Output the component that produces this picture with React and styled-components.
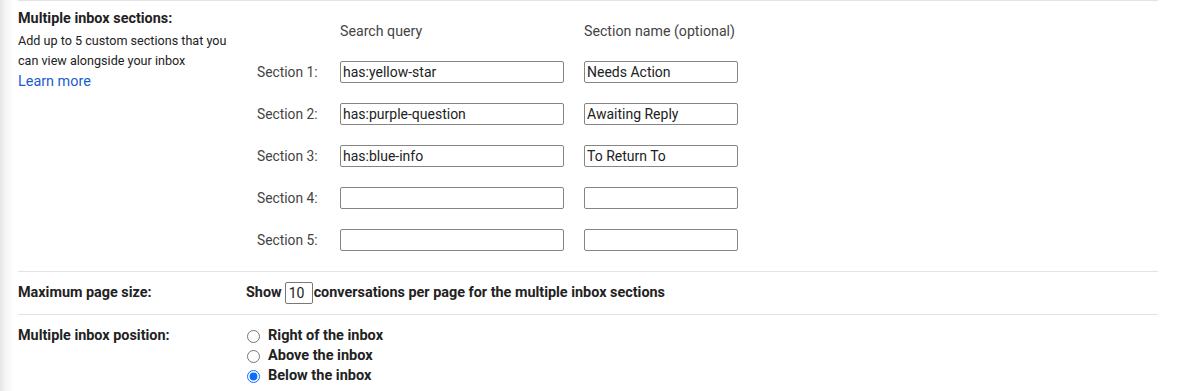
import React from "react";
import styled, { createGlobalStyle } from "styled-components";

const Global = createGlobalStyle`
  html, body { margin: 0; padding: 0; background: #fff; }
  body {
    font-family: Roboto, "Liberation Sans", Arial, sans-serif;
    color: #222;
    background: linear-gradient(to right, #e6e6e6 0px, #f6f6f6 6px, #ffffff 14px) no-repeat;
    min-height: 391px;
  }
`;

const Page = styled.div`
  padding-left: 18px;
  width: 1140px;
`;

const Row = styled.div`
  display: grid;
  grid-template-columns: 228px 1fr;
  border-top: 1px solid #e3e3e3;
  padding: ${(p) => p.$pad || "0"};
`;

const Label = styled.div`
  font-size: 14.4px;
  line-height: 20px;
  font-weight: 700;
  color: #222;
  align-self: ${(p) => (p.$center ? "center" : "start")};
`;

const SideBlock = styled.div`
  padding-top: 10px;
  display: flex;
  flex-direction: column;
`;

const SideTitle = styled.div`
  font-size: 14.4px;
  font-weight: 700;
  line-height: 16px;
  color: #222;
`;

const SideDesc = styled.div`
  margin-top: 4px;
  font-size: 12.6px;
  line-height: 20px;
  color: #222;
  width: 220px;
`;

const LearnMore = styled.a`
  font-size: 14.4px;
  line-height: 20px;
  color: #1a5ccf;
  text-decoration: none;
  margin-top: 1px;
`;

const SectionGrid = styled.div`
  padding: 20px 0 10px;
  display: grid;
  grid-template-columns: 94px 244px 154px;
  grid-template-rows: 30px repeat(5, 42px);
  align-items: center;
`;

const HeadCell = styled.div`
  font-size: 14.2px;
  line-height: 20px;
  color: #444;
  align-self: start;
`;

const SectionLabel = styled.div`
  font-size: 13.8px;
  color: #444;
  padding-left: 11px;
`;

const TextBox = styled.input`
  box-sizing: border-box;
  width: ${(p) => p.$w}px;
  height: 22px;
  margin: 0;
  border: 1px solid #858585;
  border-radius: 2px;
  padding: 0 2px;
  font-family: Roboto, "Liberation Sans", Arial, sans-serif;
  font-size: 14px;
  color: #222;
  background: #fff;
  outline: none;
`;

const InlineLine = styled.div`
  display: flex;
  align-items: center;
  font-size: 14.4px;
  line-height: 20px;
  font-weight: 700;
  color: #222;
`;

const SmallBox = styled.input`
  box-sizing: border-box;
  width: 28px;
  height: 22px;
  margin: 0 1px 0 3px;
  border: 1px solid #777;
  border-radius: 2px;
  padding: 0 3px;
  font-family: Roboto, "Liberation Sans", Arial, sans-serif;
  font-size: 14px;
  color: #222;
`;

const RadioList = styled.div`
  display: flex;
  flex-direction: column;
`;

const RadioRow = styled.label`
  display: flex;
  align-items: center;
  font-size: 14.5px;
  line-height: 20px;
  font-weight: 700;
  color: #222;
`;

const Radio = styled.input`
  width: 13px;
  height: 13px;
  margin: 0 8px 0 1px;
  accent-color: #0a6cff;
`;

const sections = [
  ["has:yellow-star", "Needs Action"],
  ["has:purple-question", "Awaiting Reply"],
  ["has:blue-info", "To Return To"],
  ["", ""],
  ["", ""],
];

export default function App() {
  return (
    <>
      <Global />
      <Page>
        <Row>
          <SideBlock>
            <SideTitle>Multiple inbox sections:</SideTitle>
            <SideDesc>Add up to 5 custom sections that you can view alongside your inbox</SideDesc>
            <LearnMore href="#">Learn more</LearnMore>
          </SideBlock>
          <SectionGrid>
            <div />
            <HeadCell>Search query</HeadCell>
            <HeadCell>Section name (optional)</HeadCell>
            {sections.map(([q, n], i) => (
              <React.Fragment key={i}>
                <SectionLabel>Section {i + 1}:</SectionLabel>
                <TextBox $w={224} defaultValue={q} />
                <TextBox $w={154} defaultValue={n} />
              </React.Fragment>
            ))}
          </SectionGrid>
        </Row>
        <Row $pad="10px 0">
          <Label $center>Maximum page size:</Label>
          <InlineLine>
            Show <SmallBox defaultValue="10" /> conversations per page for the multiple inbox sections
          </InlineLine>
        </Row>
        <Row $pad="11px 0 6px">
          <Label>Multiple inbox position:</Label>
          <RadioList>
            <RadioRow><Radio type="radio" name="pos" />Right of the inbox</RadioRow>
            <RadioRow><Radio type="radio" name="pos" />Above the inbox</RadioRow>
            <RadioRow><Radio type="radio" name="pos" defaultChecked />Below the inbox</RadioRow>
          </RadioList>
        </Row>
      </Page>
    </>
  );
}
